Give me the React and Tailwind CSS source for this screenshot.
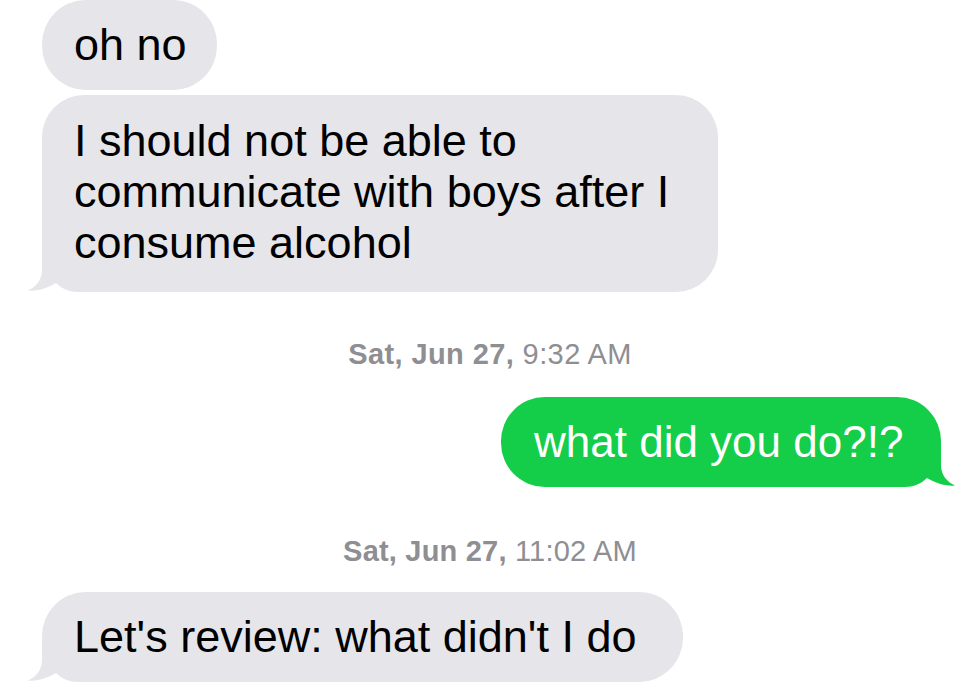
import React from "react";

function GrayTail() {
  return (
    <svg
      className="absolute left-[-16px] bottom-0"
      width="66"
      height="44"
      viewBox="0 0 66 44"
    >
      <path
        d="M16,0 L16,22 C16,32 10,39 2,42.5 C11,43.5 22,40 30,35 C36,41 44,44 52,44 L66,44 L66,0 Z"
        fill="#e5e5ea"
      />
    </svg>
  );
}

function GreenTail() {
  return (
    <svg
      className="absolute right-[-16px] bottom-0"
      width="66"
      height="44"
      viewBox="0 0 66 44"
    >
      <path
        d="M50,0 L50,22 C50,32 56,39 64,42.5 C55,43.5 44,40 36,35 C30,41 22,44 14,44 L0,44 L0,0 Z"
        fill="#14cd48"
      />
    </svg>
  );
}

export default function App() {
  return (
    <div className="w-[980px] h-[690px] overflow-hidden bg-white font-['Liberation_Sans',Arial,sans-serif] antialiased">
      <div className="flex flex-col">
        <div className="pl-[42px] flex">
          <div className="relative w-[175px] rounded-[44px] bg-[#e5e5ea] pl-[32px] py-[19px] text-[45px] leading-[52px] text-black">
            oh no
          </div>
        </div>

        <div className="pl-[42px] flex mt-[5px]">
          <div className="relative w-[676px] rounded-[42px] bg-[#e5e5ea] pl-[32px] pr-[40px] pt-[20px] pb-[24px] text-[45px] leading-[51px] text-black">
            <GrayTail />
            <span className="relative">
              I should not be able to communicate with boys after I consume alcohol
            </span>
          </div>
        </div>

        <div className="mt-[45px] text-center text-[29px] leading-[34px] tracking-[0.4px] text-[#8e8e93]">
          <span className="font-bold">Sat, Jun 27,</span> 9:32 AM
        </div>

        <div className="flex justify-end pr-[39px] mt-[26px]">
          <div className="relative w-[440px] rounded-[44px] bg-[#14cd48] pl-[33px] py-[19px] text-[44px] leading-[52px] text-white">
            <GreenTail />
            <span className="relative">what did you do?!?</span>
          </div>
        </div>

        <div className="mt-[47px] text-center text-[29px] leading-[34px] tracking-[0.2px] text-[#8e8e93]">
          <span className="font-bold">Sat, Jun 27,</span> 11:02 AM
        </div>

        <div className="pl-[42px] flex mt-[24px]">
          <div className="relative w-[641px] rounded-[44px] bg-[#e5e5ea] pl-[32px] py-[19px] text-[45px] leading-[52px] text-black">
            <GrayTail />
            <span className="relative">Let's review: what didn't I do</span>
          </div>
        </div>
      </div>
    </div>
  );
}
